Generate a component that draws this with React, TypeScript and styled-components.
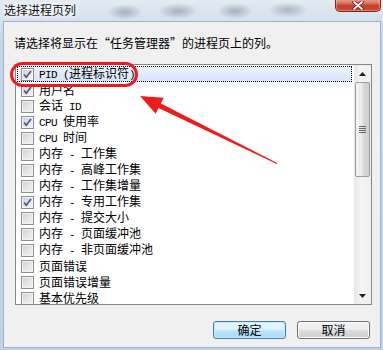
import React from "react";
import styled, { createGlobalStyle, css } from "styled-components";

const Global = createGlobalStyle`
  html, body { margin: 0; padding: 0; background: #fff; }
  body {
    width: 383px; height: 350px; overflow: hidden;
    font-family: "Noto Sans CJK SC", "Noto Sans", sans-serif;
  }
`;

const Window = styled.div`
  position: relative;
  width: 383px;
  height: 350px;
  display: flex;
  flex-direction: column;
  overflow: hidden;
  background:
    radial-gradient(ellipse 18px 8px at 125px 12px, rgba(120,135,150,0.55), transparent),
    radial-gradient(ellipse 20px 8px at 178px 11px, rgba(110,125,140,0.5), transparent),
    radial-gradient(ellipse 18px 8px at 235px 11px, rgba(110,125,140,0.5), transparent),
    radial-gradient(ellipse 20px 8px at 288px 10px, rgba(120,135,150,0.5), transparent),
    linear-gradient(to bottom, #e3ebf3 0px, #d4e1ee 20px, #c3d6ea 40px, #bdd2e8 100%);
`;

const TitleBar = styled.div`
  height: 21px;
  flex: 0 0 21px;
  display: flex;
  justify-content: space-between;
  align-items: flex-start;
`;

const TitleText = styled.div`
  padding-left: 4px;
  font-size: 12px;
  line-height: 20px;
  color: #111;
  text-shadow: 0 0 4px #fff, 0 0 6px #fff, 0 0 8px #fff;
`;

const CloseButton = styled.div`
  width: 46px;
  height: 13px;
  margin-right: 2px;
  margin-top: -1px;
  box-sizing: border-box;
  border: 1px solid #6e2a22;
  border-top: none;
  border-radius: 0 0 5px 5px;
  background: linear-gradient(to bottom, #e8a493 0%, #d9745e 35%, #c7412a 55%, #c84a30 100%);
  box-shadow: inset 0 0 0 1px rgba(255,200,190,0.45);
  display: flex;
  align-items: center;
  justify-content: center;
`;

const Body = styled.div`
  flex: 1;
  margin: 0 2px 3px 3px;
  border: 1px solid #a3b1c1;
  background: #f0f0f0;
  display: flex;
  flex-direction: column;
  padding: 13px 8px 8px 11px;
`;

const Instruction = styled.p`
  margin: 0;
  font-size: 12px;
  line-height: 16px;
  color: #000;
  margin-left: -1px;
`;

const ListBox = styled.div`
  margin-top: 13px;
  height: 241px;
  box-sizing: border-box;
  border: 1px solid #828790;
  background: #fff;
  display: flex;
`;

const Items = styled.div`
  flex: 1;
  padding-top: 1px;
  overflow: hidden;
  display: flex;
  flex-direction: column;
`;

const Row = styled.div<{ $selected?: boolean }>`
  height: 16px;
  flex: 0 0 16px;
  box-sizing: border-box;
  margin: 0 2px 0 1px;
  padding-left: 4px;
  display: flex;
  align-items: center;
  gap: 5px;
  font-size: 12px;
  line-height: 16px;
  color: #000;
  white-space: pre;
  ${(p) =>
    p.$selected &&
    css`
      background: linear-gradient(to bottom, #eef4fd, #d5e4fa);
      outline: 1px dotted #000;
      outline-offset: -1px;
    `}
`;

const Label = styled.span`
  white-space: pre;
`;

const Latin = styled.span`
  font-family: "Liberation Mono", "DejaVu Sans Mono", monospace;
  font-size: 11px;
  letter-spacing: -0.6px;
`;

const Box = styled.span`
  width: 13px;
  height: 13px;
  flex: 0 0 13px;
  box-sizing: border-box;
  border: 1px solid #8f8f8f;
  background: linear-gradient(135deg, #c6cad0 0%, #e6e7e9 55%, #f6f6f6 100%);
  box-shadow: inset 0 0 0 1px #f4f4f4;
  display: flex;
  align-items: center;
  justify-content: center;
`;

const ScrollBar = styled.div`
  width: 17px;
  flex: 0 0 17px;
  display: flex;
  flex-direction: column;
  background: linear-gradient(to right, #e6e6e6, #f4f4f4 40%, #f0f0f0);
`;

const ScrollArrow = styled.div`
  height: 17px;
  flex: 0 0 17px;
  display: flex;
  align-items: center;
  justify-content: center;
`;

const Thumb = styled.div`
  margin: 0 1px;
  height: 95px;
  box-sizing: border-box;
  border: 1px solid #9c9c9c;
  border-radius: 2px;
  background: linear-gradient(to right, #f4f4f4 0%, #ebebeb 45%, #d9d9d9 55%, #cfcfcf 100%);
  display: flex;
  align-items: center;
  justify-content: center;
`;

const Track = styled.div`
  flex: 1;
`;

const ButtonRow = styled.div`
  margin-top: 16px;
  display: flex;
  justify-content: flex-end;
  gap: 11px;
  padding-right: 2px;
`;

const Button = styled.button<{ $default?: boolean }>`
  width: 73px;
  height: 18px;
  box-sizing: border-box;
  padding: 0;
  border: 1px solid #707070;
  border-radius: 3px;
  font-family: "Noto Sans CJK SC", "Noto Sans", sans-serif;
  font-size: 12px;
  line-height: 16px;
  color: #000;
  background: linear-gradient(to bottom, #f2f2f2 0%, #ebebeb 50%, #dddddd 51%, #cfcfcf 100%);
  box-shadow: inset 0 0 0 1px #fcfcfc;
  ${(p) =>
    p.$default &&
    css`
      border-color: #3c7fb1;
      background: linear-gradient(to bottom, #eaf6fd 0%, #d9f0fc 50%, #bee6fd 51%, #a7d9f5 100%);
      box-shadow: inset 0 0 0 1px #c8e8f8;
    `}
`;

const Highlight = styled.div`
  position: absolute;
  left: 10px;
  top: 62px;
  width: 128px;
  height: 25px;
  box-sizing: border-box;
  border: 3px solid #ec1c1c;
  border-radius: 13px;
  pointer-events: none;
`;

const Overlay = styled.svg`
  position: absolute;
  left: 0;
  top: 0;
  pointer-events: none;
`;

const Check = () => (
  <svg width="9" height="9" viewBox="0 0 9 9">
    <path d="M1 4.5 L3.3 7.3 L8 1" fill="none" stroke="#40568f" strokeWidth="1.6" />
  </svg>
);

const items: { label: string; checked: boolean }[] = [
  { label: "PID (进程标识符)", checked: true },
  { label: "用户名", checked: true },
  { label: "会话 ID", checked: false },
  { label: "CPU 使用率", checked: true },
  { label: "CPU 时间", checked: false },
  { label: "内存 - 工作集", checked: false },
  { label: "内存 - 高峰工作集", checked: false },
  { label: "内存 - 工作集增量", checked: false },
  { label: "内存 - 专用工作集", checked: true },
  { label: "内存 - 提交大小", checked: false },
  { label: "内存 - 页面缓冲池", checked: false },
  { label: "内存 - 非页面缓冲池", checked: false },
  { label: "页面错误", checked: false },
  { label: "页面错误增量", checked: false },
  { label: "基本优先级", checked: false },
];

const renderLabel = (text: string) =>
  text
    .split(/([\x20-\x7E]+)/)
    .filter((s) => s.length > 0)
    .map((seg, i) =>
      /^[\x20-\x7E]+$/.test(seg) ? <Latin key={i}>{seg}</Latin> : <React.Fragment key={i}>{seg}</React.Fragment>
    );

export default function App() {
  return (
    <>
      <Global />
      <Window>
        <TitleBar>
          <TitleText>选择进程页列</TitleText>
          <CloseButton>
            <svg width="12" height="9" viewBox="0 0 12 9">
              <path d="M2 1 L10 8 M10 1 L2 8" stroke="#5a1c14" strokeWidth="3.4" strokeLinecap="round" />
              <path d="M2 1 L10 8 M10 1 L2 8" stroke="#fff" strokeWidth="1.8" strokeLinecap="round" />
            </svg>
          </CloseButton>
        </TitleBar>
        <Body>
          <Instruction>请选择将显示在“任务管理器”的进程页上的列。</Instruction>
          <ListBox>
            <Items>
              {items.map((it, i) => (
                <Row key={i} $selected={i === 0}>
                  <Box>{it.checked && <Check />}</Box>
                  <Label>{renderLabel(it.label)}</Label>
                </Row>
              ))}
            </Items>
            <ScrollBar>
              <ScrollArrow>
                <svg width="7" height="4" viewBox="0 0 7 4">
                  <path d="M0 4 L3.5 0 L7 4 Z" fill="#222" />
                </svg>
              </ScrollArrow>
              <Thumb>
                <svg width="7" height="7" viewBox="0 0 7 7">
                  <path d="M0 0.5 H7 M0 2.5 H7 M0 4.5 H7 M0 6.5 H7" stroke="#666" strokeWidth="1" />
                </svg>
              </Thumb>
              <Track />
              <ScrollArrow>
                <svg width="7" height="4" viewBox="0 0 7 4">
                  <path d="M0 0 L7 0 L3.5 4 Z" fill="#222" />
                </svg>
              </ScrollArrow>
            </ScrollBar>
          </ListBox>
          <ButtonRow>
            <Button $default>确定</Button>
            <Button>取消</Button>
          </ButtonRow>
        </Body>
        <Highlight />
        <Overlay width="383" height="350" viewBox="0 0 383 350">
          <path
            d="M140 96 L163.7 97.8 L160.9 103.6 L277.2 163 L276.8 164 L158.5 108 L155.7 113.8 Z"
            fill="#ec1c1c"
          />
        </Overlay>
      </Window>
    </>
  );
}
